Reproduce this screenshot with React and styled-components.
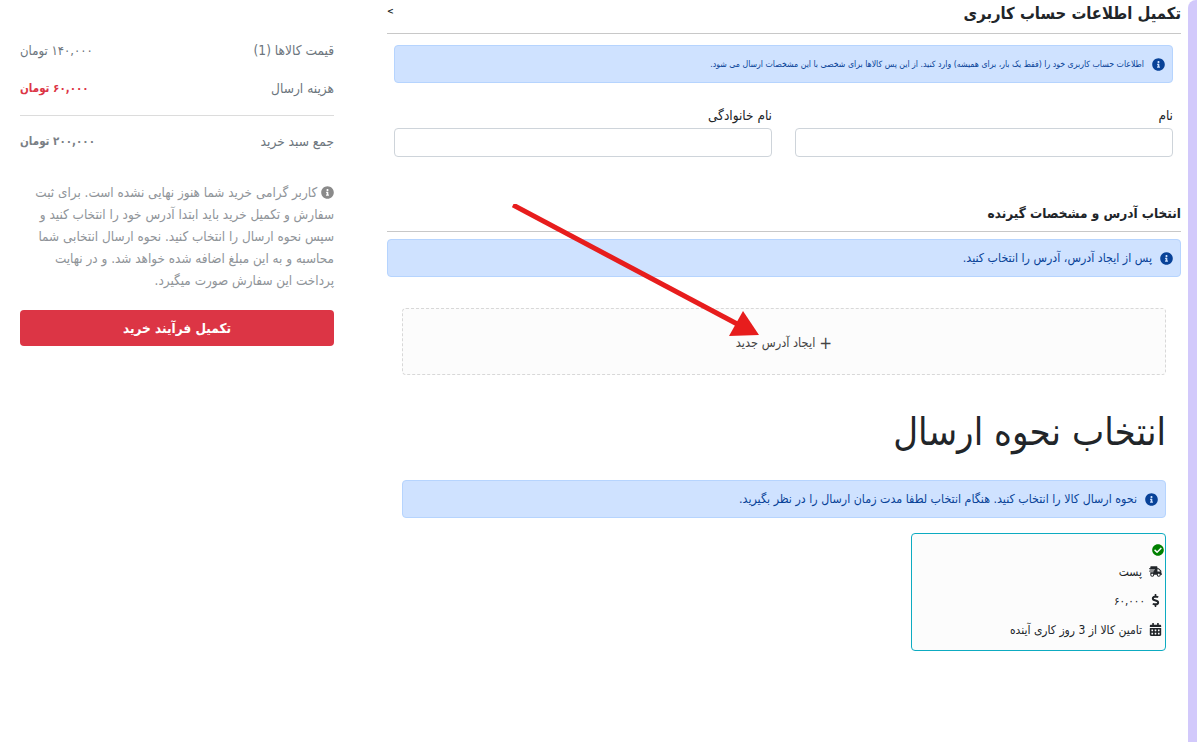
import React from 'react'
import styled, { createGlobalStyle } from 'styled-components'
import { FaInfoCircle, FaCheckCircle, FaShippingFast, FaDollarSign, FaCalendarAlt } from 'react-icons/fa'

const GlobalStyle = createGlobalStyle`
  * { box-sizing: border-box; }
  html, body { margin: 0; padding: 0; background: #ffffff; }
  body { font-family: "DejaVu Sans Condensed", "DejaVu Sans", sans-serif; font-stretch: condensed; color: #212529; }
`

function Alert({ children, small }) {
  return (
    <AlertBox>
      <AlertIcon><FaInfoCircle /></AlertIcon>
      <AlertText $small={small}>{children}</AlertText>
    </AlertBox>
  )
}

export default function App() {
  return (
    <Page>
      <GlobalStyle />
      <Sidebar dir="rtl">
        <PriceRow>
          <span>قیمت کالاها (1)</span>
          <Value>۱۴۰,۰۰۰ تومان</Value>
        </PriceRow>
        <PriceRow>
          <span>هزینه ارسال</span>
          <Strong $red>۶۰,۰۰۰ تومان</Strong>
        </PriceRow>
        <SideLine />
        <PriceRow>
          <span>جمع سبد خرید</span>
          <Strong>۲۰۰,۰۰۰ تومان</Strong>
        </PriceRow>
        <Notice>
          <FaInfoCircle /> کاربر گرامی خرید شما هنوز نهایی نشده است. برای ثبت سفارش و تکمیل خرید باید ابتدا آدرس خود را انتخاب کنید و سپس نحوه ارسال را انتخاب کنید. نحوه ارسال انتخابی شما محاسبه و به این مبلغ اضافه شده خواهد شد. و در نهایت پرداخت این سفارش صورت میگیرد.
        </Notice>
        <SubmitButton>تکمیل فرآیند خرید</SubmitButton>
      </Sidebar>

      <Main dir="rtl">
        <Title>
          <span>تکمیل اطلاعات حساب کاربری</span>
          <Chevron>&gt;</Chevron>
        </Title>
        <Indented>
          <Alert small>اطلاعات حساب کاربری خود را (فقط یک بار، برای همیشه) وارد کنید. از این پس کالاها برای شخصی با این مشخصات ارسال می شود.</Alert>
          <Fields>
            <Field>
              <label>نام</label>
              <input type="text" />
            </Field>
            <Field>
              <label>نام خانوادگی</label>
              <input type="text" />
            </Field>
          </Fields>
        </Indented>

        <SectionTitle>انتخاب آدرس و مشخصات گیرنده</SectionTitle>
        <Alert>پس از ایجاد آدرس، آدرس را انتخاب کنید.</Alert>

        <Inset>
          <AddAddress><span>+</span> ایجاد آدرس جدید</AddAddress>
          <BigTitle>انتخاب نحوه ارسال</BigTitle>
          <Alert>نحوه ارسال کالا را انتخاب کنید. هنگام انتخاب لطفا مدت زمان ارسال را در نظر بگیرید.</Alert>
          <ShippingCard>
            <Check><FaCheckCircle /></Check>
            <ShippingRow><FaShippingFast /><span>پست</span></ShippingRow>
            <ShippingRow><FaDollarSign /><Amount>۶۰,۰۰۰</Amount></ShippingRow>
            <ShippingRow><FaCalendarAlt /><span>تامین کالا از 3 روز کاری آینده</span></ShippingRow>
          </ShippingCard>
        </Inset>

        <Arrow viewBox="0 0 260 140" aria-hidden="true">
          <line x1="1" y1="1" x2="229" y2="122" stroke="#e71d1d" strokeWidth="5" />
          <polygon points="247,131 217,132 231,107" fill="#e71d1d" />
        </Arrow>
      </Main>

      <ScrollEdge />
    </Page>
  )
}

const Page = styled.div`
  position: relative;
  display: flex;
  height: 742px;
  overflow: hidden;
  padding-left: 20px;
`

const Sidebar = styled.aside`
  width: 314px;
  flex: none;
  padding-top: 36px;
  font-size: 13.6px;
  color: #6c757d;
`

const PriceRow = styled.div`
  display: flex;
  justify-content: space-between;
  align-items: center;
  height: 28px;
  margin-bottom: 10px;
`

const Value = styled.span`
  font-size: 13px;
`

const Strong = styled.span`
  font-size: 11.5px;
  font-weight: 700;
  color: ${p => (p.$red ? '#dc3545' : '#7a7f85')};
`

const SideLine = styled.hr`
  border: 0;
  border-top: 1px solid #dcdcdc;
  margin: 13px 0 11px;
`

const Notice = styled.p`
  margin: 27px 0 0;
  font-size: 13.4px;
  line-height: 22px;
  color: #8f9499;
  svg {
    font-size: 13px;
    vertical-align: -2px;
    color: #8a8a8a;
  }
`

const SubmitButton = styled.button`
  display: block;
  width: 100%;
  height: 36px;
  margin-top: 18px;
  border: 0;
  border-radius: 4px;
  background: #dc3545;
  color: #ffffff;
  font: 700 13.5px "DejaVu Sans Condensed", "DejaVu Sans", sans-serif;
  font-stretch: condensed;
`

const Main = styled.main`
  position: relative;
  width: 794px;
  margin-left: 53px;
  flex: none;
`

const Title = styled.h2`
  display: flex;
  justify-content: space-between;
  height: 34px;
  margin: 0;
  padding-top: 3px;
  font-size: 16.5px;
  line-height: 22px;
  font-weight: 700;
  color: #212529;
  border-bottom: 1px solid #c8c8c8;
`

const Chevron = styled.span`
  padding-top: 1px;
  font-size: 9px;
  line-height: 14px;
`

const Indented = styled.div`
  padding: 11px 8px 0 7px;
`

const AlertBox = styled.div`
  display: flex;
  align-items: center;
  gap: 8px;
  height: 38px;
  padding: 0 7px;
  background: #cfe2ff;
  border: 1px solid #b6d4fe;
  border-radius: 4px;
  color: #084298;
`

const AlertIcon = styled.span`
  display: flex;
  font-size: 13px;
  color: #084298;
`

const AlertText = styled.span`
  font-size: ${p => (p.$small ? '8.7px' : '12.3px')};
`

const Fields = styled.div`
  display: flex;
  gap: 23px;
  margin-top: 23px;
`

const Field = styled.div`
  flex: 1;
  label {
    display: block;
    height: 22px;
    font-size: 13.5px;
    line-height: 18px;
    color: #212529;
  }
  input {
    display: block;
    width: 100%;
    height: 29px;
    border: 1px solid #ced4da;
    border-radius: 4px;
    background: #ffffff;
  }
`

const SectionTitle = styled.h3`
  height: 32px;
  margin: 43px 0 7px;
  font-size: 13.5px;
  line-height: 26px;
  font-weight: 700;
  color: #212529;
  border-bottom: 1px solid #c8c8c8;
`

const Inset = styled.div`
  padding: 31px 15px 0;
`

const AddAddress = styled.div`
  display: flex;
  align-items: center;
  justify-content: center;
  gap: 4px;
  height: 67px;
  padding-top: 2px;
  background: #fcfcfc;
  border: 1px dashed #d8d8d8;
  border-radius: 4px;
  font-size: 12.7px;
  color: #444444;
  span {
    font-size: 17px;
  }
`

const BigTitle = styled.h1`
  margin: 29px 0 19px;
  font-size: 38px;
  line-height: 57px;
  font-weight: 400;
  color: #212529;
`

const ShippingCard = styled.div`
  width: 255px;
  height: 118px;
  margin-top: 15px;
  padding: 10px 1px 0 0;
  background: #fcfcfc;
  border: 1px solid #0dabc1;
  border-radius: 4px;
`

const Check = styled.div`
  display: flex;
  height: 13px;
  font-size: 12px;
  color: #008000;
`

const ShippingRow = styled.div`
  display: flex;
  align-items: center;
  gap: 7px;
  height: 29px;
  padding-right: 2px;
  font-size: 12px;
  color: #212529;
  svg {
    height: 13px;
    width: auto;
  }
`

const Amount = styled.span`
  margin-right: -3px;
  font-size: 11.5px;
`

const Arrow = styled.svg`
  position: absolute;
  left: 125px;
  top: 204px;
  width: 260px;
  height: 140px;
`

const ScrollEdge = styled.div`
  position: absolute;
  top: 0;
  right: 0;
  bottom: 0;
  width: 9px;
  background: #d2c9fb;
  border-top-left-radius: 8px;
`
